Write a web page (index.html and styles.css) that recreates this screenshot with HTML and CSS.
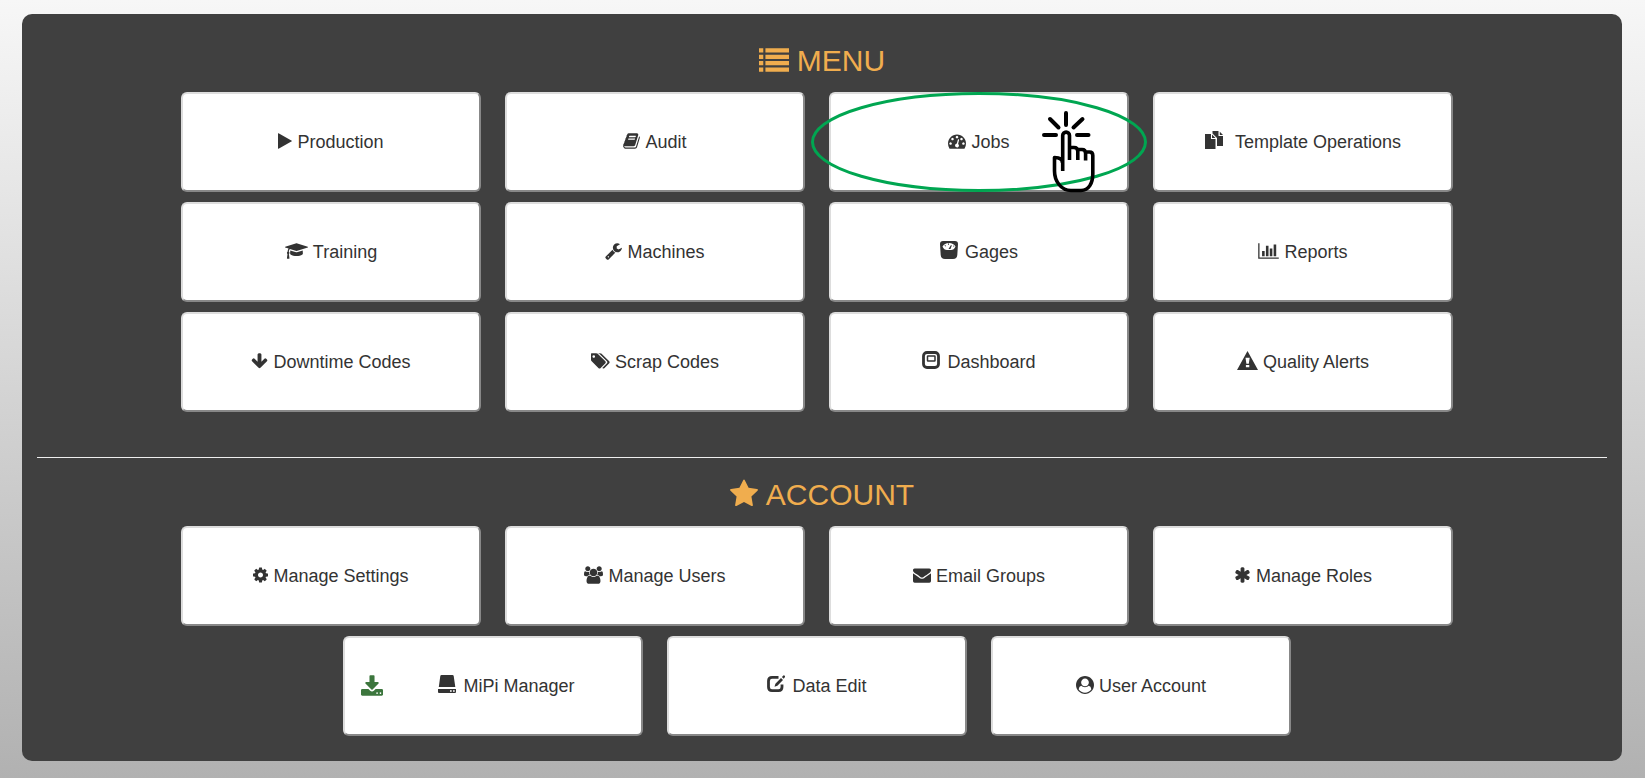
FILE: index.html
```
<!DOCTYPE html>
<html lang="en">
<head>
    <meta charset="UTF-8">
    <title>Menu</title>
    <link rel="stylesheet" href="styles.css">
</head>
<body>
    <main class="panel">
        <h2>
            <svg class="w30" viewBox="0 0 1792 1792"><path d="M0 192h256v256h-256zM384 192h1408v256h-1408zM0 576h256v256h-256zM384 576h1408v256h-1408zM0 960h256v256h-256zM384 960h1408v256h-1408zM0 1344h256v256h-256zM384 1344h1408v256h-1408z"/></svg>
            MENU
        </h2>

        <div class="buttons">
            <button type="button">
                <svg class="w14" viewBox="192 0 1408 1792"><path d="M1576 927l-1328 738q-23 13-39.5 3t-16.5-36v-1472q0-26 16.5-36t39.5 3l1328 738q23 13 23 31t-23 31z"/></svg>
                Production
            </button>
            <button type="button">
                <svg class="w17" viewBox="64 0 1664 1792"><path d="M1703 478q40 57 18 129l-275 906q-19 64-76.5 107.5t-122.5 43.5h-923q-77 0-148.5-53.5t-99.5-131.5q-24-67-2-127 0-4 3-27t4-37q1-8-3-21.5t-3-19.5q2-11 8-21t16.5-23.5 16.5-23.5q23-38 45-91.5t30-91.5q3-10 .5-30t-.5-28q3-11 17-28t17-23q21-36 42-92t25-90q1-9-2.5-32t.5-28q4-13 22-30.5t22-22.5q19-26 42.5-84.5t27.5-96.5q1-8-3-25.5t-2-26.5q2-8 9-18t18-23 17-21q8-12 16.5-30.5t15-35 16-36 19.5-32 26.5-23.5 36-11.5 47.5 5.5l-1 3q38-9 51-9h761q74 0 114 56t18 130l-274 906q-36 119-71.5 153.5t-128.5 34.5h-869q-27 0-38 15-11 16-1 43 24 70 144 70h923q29 0 56-15.5t35-41.5l300-987q7-22 5-57 38 15 59 43zm-1064 2q-4 13 2 22.5t20 9.5h608q13 0 25.5-9.5t16.5-22.5l21-64q4-13-2-22.5t-20-9.5h-608q-13 0-25.5 9.5t-16.5 22.5zm-83 256q-4 13 2 22.5t20 9.5h608q13 0 25.5-9.5t16.5-22.5l21-64q4-13-2-22.5t-20-9.5h-608q-13 0-25.5 9.5t-16.5 22.5z"/></svg>
                Audit
            </button>
            <div class="highlight">
                <button type="button">
                    <svg class="w18" viewBox="0 0 1792 1792"><path d="M384 1152q0-53-37.5-90.5t-90.5-37.5-90.5 37.5-37.5 90.5 37.5 90.5 90.5 37.5 90.5-37.5 37.5-90.5zm192-448q0-53-37.5-90.5t-90.5-37.5-90.5 37.5-37.5 90.5 37.5 90.5 90.5 37.5 90.5-37.5 37.5-90.5zm428 481l101-382q6-26-7.5-48.5t-38.5-29.5-48 6.5-30 39.5l-101 382q-60 5-107 43.5t-63 98.5q-20 77 20 146t117 89 146-20 89-117q16-60-6-117t-72-91zm660-33q0-53-37.5-90.5t-90.5-37.5-90.5 37.5-37.5 90.5 37.5 90.5 90.5 37.5 90.5-37.5 37.5-90.5zm-640-640q0-53-37.5-90.5t-90.5-37.5-90.5 37.5-37.5 90.5 37.5 90.5 90.5 37.5 90.5-37.5 37.5-90.5zm448 192q0-53-37.5-90.5t-90.5-37.5-90.5 37.5-37.5 90.5 37.5 90.5 90.5 37.5 90.5-37.5 37.5-90.5zm320 448q0 261-141 483-19 29-54 29h-1402q-35 0-54-29-141-221-141-483 0-182 71-348t191-286 286-191 348-71 348 71 286 191 191 286 71 348z"/></svg>
                    Jobs
                </button>
                <!-- ring and click pointer drawn over the button -->
                <svg class="pointer" viewBox="0 0 336 104">
                    <ellipse cx="168" cy="50" rx="166.5" ry="48.5" fill="none" stroke="#00a651" stroke-width="3"/>
                    <g fill="none" stroke="#000" stroke-width="4" stroke-linecap="round" stroke-linejoin="round">
                        <path d="M255 21v12M266 43h11.500M233 43h12M262.500 35.500l9-8.500M247.500 35.500l-8.500-8.500"/>
                    </g>
                    <g fill="none" stroke="#000" stroke-width="3.600" stroke-linejoin="round">
                        <path d="M251.700 79V43.500a3.300 3.300 0 0 1 6.800 0V68M258.500 55.500h4.500q3.800 0 3.800 4V68M267 57.500h4q3.600 0 3.600 4V68.500M275 60h3.500q3.300 0 3.300 3.500V82C281.700 91 278 98.500 270 98.500H260C250 98.500 243.500 89 243.500 79V65.500Q251.500 65.500 251.500 71"/>
                    </g>
                </svg>
            </div>
            <button type="button">
                <svg class="w18 glyph wide" viewBox="0 0 18 18"><path d="M0 3h6v5h4.500v10H0zM7 3.500L10.500 7H7zM7.500 0H13.500v5H18v10h-6V7L7.500 2.500zM14.800.8L18 4h-3.200z"/></svg>
                Template Operations
            </button>
            <button type="button">
                <svg class="w23" viewBox="0 0 2304 1792"><path d="M1774 836l18 316q4 69-82 128t-235 93.500-323 34.500-323-34.500-235-93.500-82-128l18-316 574 181q22 7 48 7t48-7zm530-324q0 23-22 31l-1120 352q-4 1-10 1t-10-1l-652-206q-43 34-71 111.500t-34 178.500q63 36 63 109 0 69-58 107l58 433q2 14-8 25-9 11-24 11h-192q-15 0-24-11-10-11-8-25l58-433q-58-38-58-107 0-73 65-111 11-207 98-330l-333-104q-22-8-22-31t22-31l1120-352q4-1 10-1t10 1l1120 352q22 8 22 31z"/></svg>
                Training
            </button>
            <button type="button">
                <svg class="w17" viewBox="64 0 1664 1792"><path d="M448 1472q0-26-19-45t-45-19-45 19-19 45 19 45 45 19 45-19 19-45zm644-420l-682 682q-37 37-90 37-52 0-91-37l-106-108q-38-36-38-90 0-53 38-91l681-681q39 98 114.500 173.500t173.500 114.500zm634-435q0 39-23 106-47 134-164.500 217.500t-258.500 83.500q-185 0-316.500-131.500t-131.500-316.500 131.500-316.500 316.500-131.500q58 0 121.500 16.500t107.500 46.500q16 11 16 28t-16 28l-293 169v224l193 107q5-3 79-48.500t135.500-81 70.500-35.500q15 0 23.500 10t8.500 25z"/></svg>
                Machines
            </button>
            <button type="button">
                <svg class="w18 glyph" viewBox="0 0 18 18"><path fill-rule="evenodd" d="M3 0h12q3 0 3 3l-.7 11q-.3 4-4.300 4H5q-4 0-4.300-4L0 3Q0 0 3 0zM2.500 5.500Q4 9 7 9h4q3 0 4.500-3.500Q13.500 2 9 2T2.500 5.500z"/><path d="M8.500 8l2.500-4 .8.500L10.500 8zM4.500 4.500l1 1 .6-.6-1-1zM8 2.500h1v1.300H8zM13 5l.8.800.6-.6-.8-.8z"/></svg>
                Gages
            </button>
            <button type="button">
                <svg class="w21" viewBox="0 0 2048 1792"><path d="M640 896v512h-256v-512h256zm384-512v1024h-256v-1024h256zm1024 1152v128h-2048v-1536h128v1408h1920zm-640-896v768h-256v-768h256zm384-384v1152h-256v-1152h256z"/></svg>
                Reports
            </button>
            <button type="button">
                <svg class="w17" viewBox="64 0 1664 1792"><path d="M1675 832q0 53-37 90l-651 652q-39 37-91 37-53 0-90-37l-651-652q-38-36-38-90 0-53 38-91l74-75q39-37 91-37 53 0 90 37l294 294v-704q0-52 38-90t90-38h128q52 0 90 38t38 90v704l294-294q37-37 90-37 52 0 91 37l75 75q37 39 37 91z"/></svg>
                Downtime Codes
            </button>
            <button type="button">
                <svg class="w19" viewBox="0 0 1856 1792"><path d="M384 448q0-53-37.500-90.500t-90.500-37.500-90.500 37.500-37.500 90.500 37.500 90.500 90.500 37.500 90.500-37.500 37.500-90.500zm1067 576q0 53-37 90l-491 492q-39 37-91 37-53 0-90-37l-715-716q-38-37-64.500-101t-26.500-117v-416q0-52 38-90t90-38h416q53 0 117 26.500t102 64.500l715 714q37 39 37 91zm384 0q0 53-37 90l-491 492q-39 37-91 37-36 0-59-14t-53-45l470-470q37-37 37-90 0-52-37-91l-715-714q-38-38-102-64.500t-117-26.500h224q53 0 117 26.500t102 64.500l715 714q37 39 37 91z"/></svg>
                Scrap Codes
            </button>
            <button type="button">
                <svg class="w18 glyph" viewBox="0 0 18 18"><g fill="none" stroke="currentColor"><rect x="1.500" y="1.500" width="15" height="15" rx="3.500" stroke-width="2.800"/><rect x="5.500" y="5" width="7.500" height="5" rx=".5" stroke-width="1.500"/></g></svg>
                Dashboard
            </button>
            <button type="button">
                <svg class="w21 alert" viewBox="0 0 21 19"><path fill-rule="evenodd" d="M10.500 0L21 19H0zM8.500 6.800h4.200l-.9 6H9.400zM8.900 14h3.400v2.200H8.900z"/></svg>
                Quality Alerts
            </button>
        </div>

        <hr>

        <h2>
            <svg class="w28" viewBox="64 0 1664 1792"><path d="M1728 647q0 22-26 48l-363 354 86 500q1 7 1 20 0 21-10.500 35.500t-30.500 14.500q-19 0-40-12l-449-236-449 236q-22 12-40 12-21 0-31.500-14.500t-10.500-35.500q0-6 2-20l86-500-364-354q-25-27-25-48 0-37 56-46l502-73 225-455q19-41 49-41t49 41l225 455 502 73q56 9 56 46z"/></svg>
            ACCOUNT
        </h2>

        <div class="buttons">
            <button type="button">
                <svg class="w15" viewBox="128 0 1536 1792"><path d="M1152 896q0-106-75-181t-181-75-181 75-75 181 75 181 181 75 181-75 75-181zm512-109v222q0 12-8 23t-20 13l-185 28q-19 54-39 91 35 50 107 138 10 12 10 25t-9 23q-27 37-99 108t-94 71q-12 0-26-9l-138-108q-44 23-91 38-16 136-29 186-7 28-36 28h-222q-14 0-24.500-8.500t-11.500-21.500l-28-184q-49-16-90-37l-141 107q-10 9-25 9-14 0-25-11-126-114-165-168-7-10-7-23 0-12 8-23 15-21 51-66.500t54-70.500q-27-50-41-99l-183-27q-13-2-21-12.500t-8-23.500v-222q0-12 8-23t19-13l186-28q14-46 39-92-40-57-107-138-10-12-10-24 0-10 9-23 26-36 98.500-107.500t94.500-71.500q13 0 26 10l138 107q44-23 91-38 16-136 29-186 7-28 36-28h222q14 0 24.500 8.500t11.500 21.500l28 184q49 16 90 37l142-107q9-9 24-9 13 0 25 10 129 119 165 170 7 8 7 22 0 12-8 23-15 21-51 66.500t-54 70.500q26 50 41 98l183 28q13 2 21 12.500t8 23.500z"/></svg>
                Manage Settings
            </button>
            <button type="button">
                <svg class="w19" viewBox="0 0 1920 1792"><path d="M593 896q-162 5-265 128h-134q-82 0-138-40.500t-56-118.500q0-353 124-353 6 0 43.500 21t97.500 42.500 119 21.500q67 0 133-23-5 37-5 66 0 139 81 256zm1071 637q0 120-73 189.500t-194 69.500h-874q-121 0-194-69.500t-73-189.500q0-53 3.500-103.500t14-109 26.500-108.500 43-97.500 62-81 85.500-53.500 111.500-20q10 0 43 21.500t73 48 107 48 135 21.500 135-21.500 107-48 73-48 43-21.500q61 0 111.500 20t85.500 53.500 62 81 43 97.500 26.500 108.500 14 109 3.500 103.500zm-1024-1277q0 106-75 181t-181 75-181-75-75-181 75-181 181-75 181 75 75 181zm704 384q0 159-112.500 271.500t-271.500 112.500-271.500-112.500-112.500-271.500 112.500-271.500 271.500-112.500 271.500 112.500 112.500 271.500zm576 225q0 78-56 118.500t-138 40.500h-134q-103-123-265-128 81-117 81-256 0-29-5-66 66 23 133 23 59 0 119-21.500t97.500-42.500 43.500-21q124 0 124 353zm-128-609q0 106-75 181t-181 75-181-75-75-181 75-181 181-75 181 75 75 181z"/></svg>
                Manage Users
            </button>
            <button type="button">
                <svg class="w18" viewBox="0 0 1792 1792"><path d="M1792 710v794q0 66-47 113t-113 47h-1472q-66 0-113-47t-47-113v-794q44 49 101 87 362 246 497 345 57 42 92.500 65.500t94.500 48 110 24.500h2q51 0 110-24.500t94.500-48 92.500-65.500q170-123 498-345 57-39 100-87zm0-294q0 79-49 151t-122 123q-376 261-468 325-10 7-42.500 31t-54 38.500-52 32.500-57.500 27-50 9h-2q-23 0-50-9t-57.500-27-52-32.500-54-38.500-42.500-31q-91-64-262-182.500t-205-142.500q-62-42-117-115.500t-55-136.500q0-78 41.500-130t118.500-52h1472q65 0 112.500 47t47.500 113z"/></svg>
                Email Groups
            </button>
            <button type="button">
                <svg class="w17" viewBox="64 0 1664 1792"><path d="M1546 1050q46 26 59.500 77.500t-12.500 97.500l-64 110q-26 46-77.500 59.500t-97.500-12.500l-266-153v307q0 52-38 90t-90 38h-128q-52 0-90-38t-38-90v-307l-266 153q-46 26-97.500 12.500t-77.500-59.500l-64-110q-26-46-12.500-97.500t59.500-77.500l266-154-266-154q-46-26-59.500-77.500t12.500-97.500l64-110q26-46 77.500-59.500t97.500 12.500l266 153v-307q0-52 38-90t90-38h128q52 0 90 38t38 90v307l266-153q46-26 97.500-12.500t77.500 59.500l64 110q26 46 12.500 97.500t-59.500 77.500l-266 154z"/></svg>
                Manage Roles
            </button>
            <button type="button">
                <svg class="download" viewBox="64 0 1664 1536"><path d="M1344 1344q0-26-19-45t-45-19-45 19-19 45 19 45 45 19 45-19 19-45zm256 0q0-26-19-45t-45-19-45 19-19 45 19 45 45 19 45-19 19-45zm128-224v320q0 40-28 68t-68 28h-1472q-40 0-68-28t-28-68v-320q0-40 28-68t68-28h465l135 136q58 56 136 56t136-56l136-136h464q40 0 68 28t28 68zm-325-569q17 41-14 70l-448 448q-18 19-45 19t-45-19l-448-448q-31-29-14-70 17-39 59-39h256v-448q0-26 19-45t45-19h256q26 0 45 19t19 45v448h256q42 0 59 39z"/></svg>
                <span class="label">
                    <svg class="w18 glyph" viewBox="0 0 18 18"><path fill-rule="evenodd" d="M3.500 0h11q1 0 1.200 1L17.300 12H.8L2.300 1Q2.500 0 3.500 0zM0 14h18v3q0 1-1 1H1q-1 0-1-1zM12 15.200v1.500h1.700v-1.500zM15 15.200v1.500h1.700v-1.500z"/></svg>
                    MiPi Manager
                </span>
            </button>
            <button type="button">
                <svg class="w18 glyph" viewBox="0 0 18 18"><path fill="none" stroke="currentColor" stroke-width="2.800" d="M11.500 2.400H5Q1.500 2.400 1.500 6v6Q1.500 15.600 5 15.600h6.500Q15 15.600 15 12V9.500"/><path d="M7.500 11.700l.9-3L14 3l2 2-5.600 5.800zM14.900 2l1.500-1.500q.5-.4 1 .1l.5.500q.6.500.1 1L16.700 3.800z"/></svg>
                Data Edit
            </button>
            <button type="button">
                <svg class="w18" viewBox="0 0 1792 1792"><path d="M1523 1339q-22-155-87.500-257.500t-184.500-118.500q-67 74-159.500 115.500t-195.500 41.500-195.500-41.500-159.500-115.500q-119 16-184.500 118.500t-87.500 257.500q106 150 271 237.500t356 87.500 356-87.500 271-237.500zm-243-699q0-159-112.500-271.500t-271.500-112.500-271.500 112.500-112.500 271.500 112.500 271.500 271.500 112.500 271.500-112.500 112.500-271.500zm512 256q0 182-71 347.500t-190.500 286-285.500 191.500-349 71-349-71-285.500-191.500-190.500-286-71-347.500 71-348 191-286 286-191 348-71 348 71 286 191 191 286 71 348z"/></svg>
                User Account
            </button>
        </div>
    </main>
</body>
</html>
```

FILE: styles.css
```
html {
    min-height: 100%;
    background: linear-gradient(#f7f7f7, #b1b1b1);
}

body {
    margin: 0;
    padding: 14px 23px 17px 22px;
    font-family: Arial, "Liberation Sans", sans-serif;
    color: #333;
}

.panel {
    padding: 30px 15px 25px;
    background-color: #404040;
    border-radius: 10px;
}

h2 {
    display: flex;
    justify-content: center;
    align-items: center;
    gap: 8px;
    margin: 0 0 15px;
    font-size: 30px;
    font-weight: normal;
    line-height: 33px;
    color: #f0ad4e;
}

hr {
    height: 1px;
    margin: 45px 0 20px;
    border: none;
    background-color: #eee;
}

.buttons {
    display: flex;
    flex-wrap: wrap;
    justify-content: center;
    gap: 10px 24px;
    padding-right: 10px;
}

button {
    display: flex;
    justify-content: center;
    align-items: center;
    gap: 5px;
    width: 300px;
    height: 100px;
    padding: 0 16px;
    border: 2px solid;
    border-color: #ddd #888 #888 #ddd;
    border-radius: 6px;
    background-color: white;
    color: #333;
    font-family: inherit;
    font-size: 18px;
    line-height: 24px;
    cursor: pointer;
}

button:hover {
    background-color: #e6e6e6;
}

/* icons */
svg {
    flex: none;
    height: 18px;
    margin-bottom: 2px;
    fill: currentColor;
}

h2 svg {
    height: 30px;
}

.w14 { width: 14px; }
.w15 { width: 15px; }
.w17 { width: 17px; }
.w18 { width: 18px; }
.w19 { width: 19px; }
.w21 { width: 21px; }
.w23 { width: 23px; }
.w28 { width: 28px; }
.w30 { width: 30px; }

.glyph {
    margin-right: 2px;
    margin-bottom: 4px;
}

.wide {
    margin-right: 7px;
}

.alert {
    height: 19px;
    margin-bottom: 4px;
}

.download {
    width: 22px;
    height: 21px;
    color: #3c763d;
}

.label {
    display: flex;
    flex: 1;
    justify-content: center;
    align-items: center;
    gap: 5px;
}

.highlight {
    position: relative;
}

.pointer {
    position: absolute;
    top: 0;
    left: -18px;
    width: 336px;
    height: 104px;
    margin: 0;
    pointer-events: none;
}
```
